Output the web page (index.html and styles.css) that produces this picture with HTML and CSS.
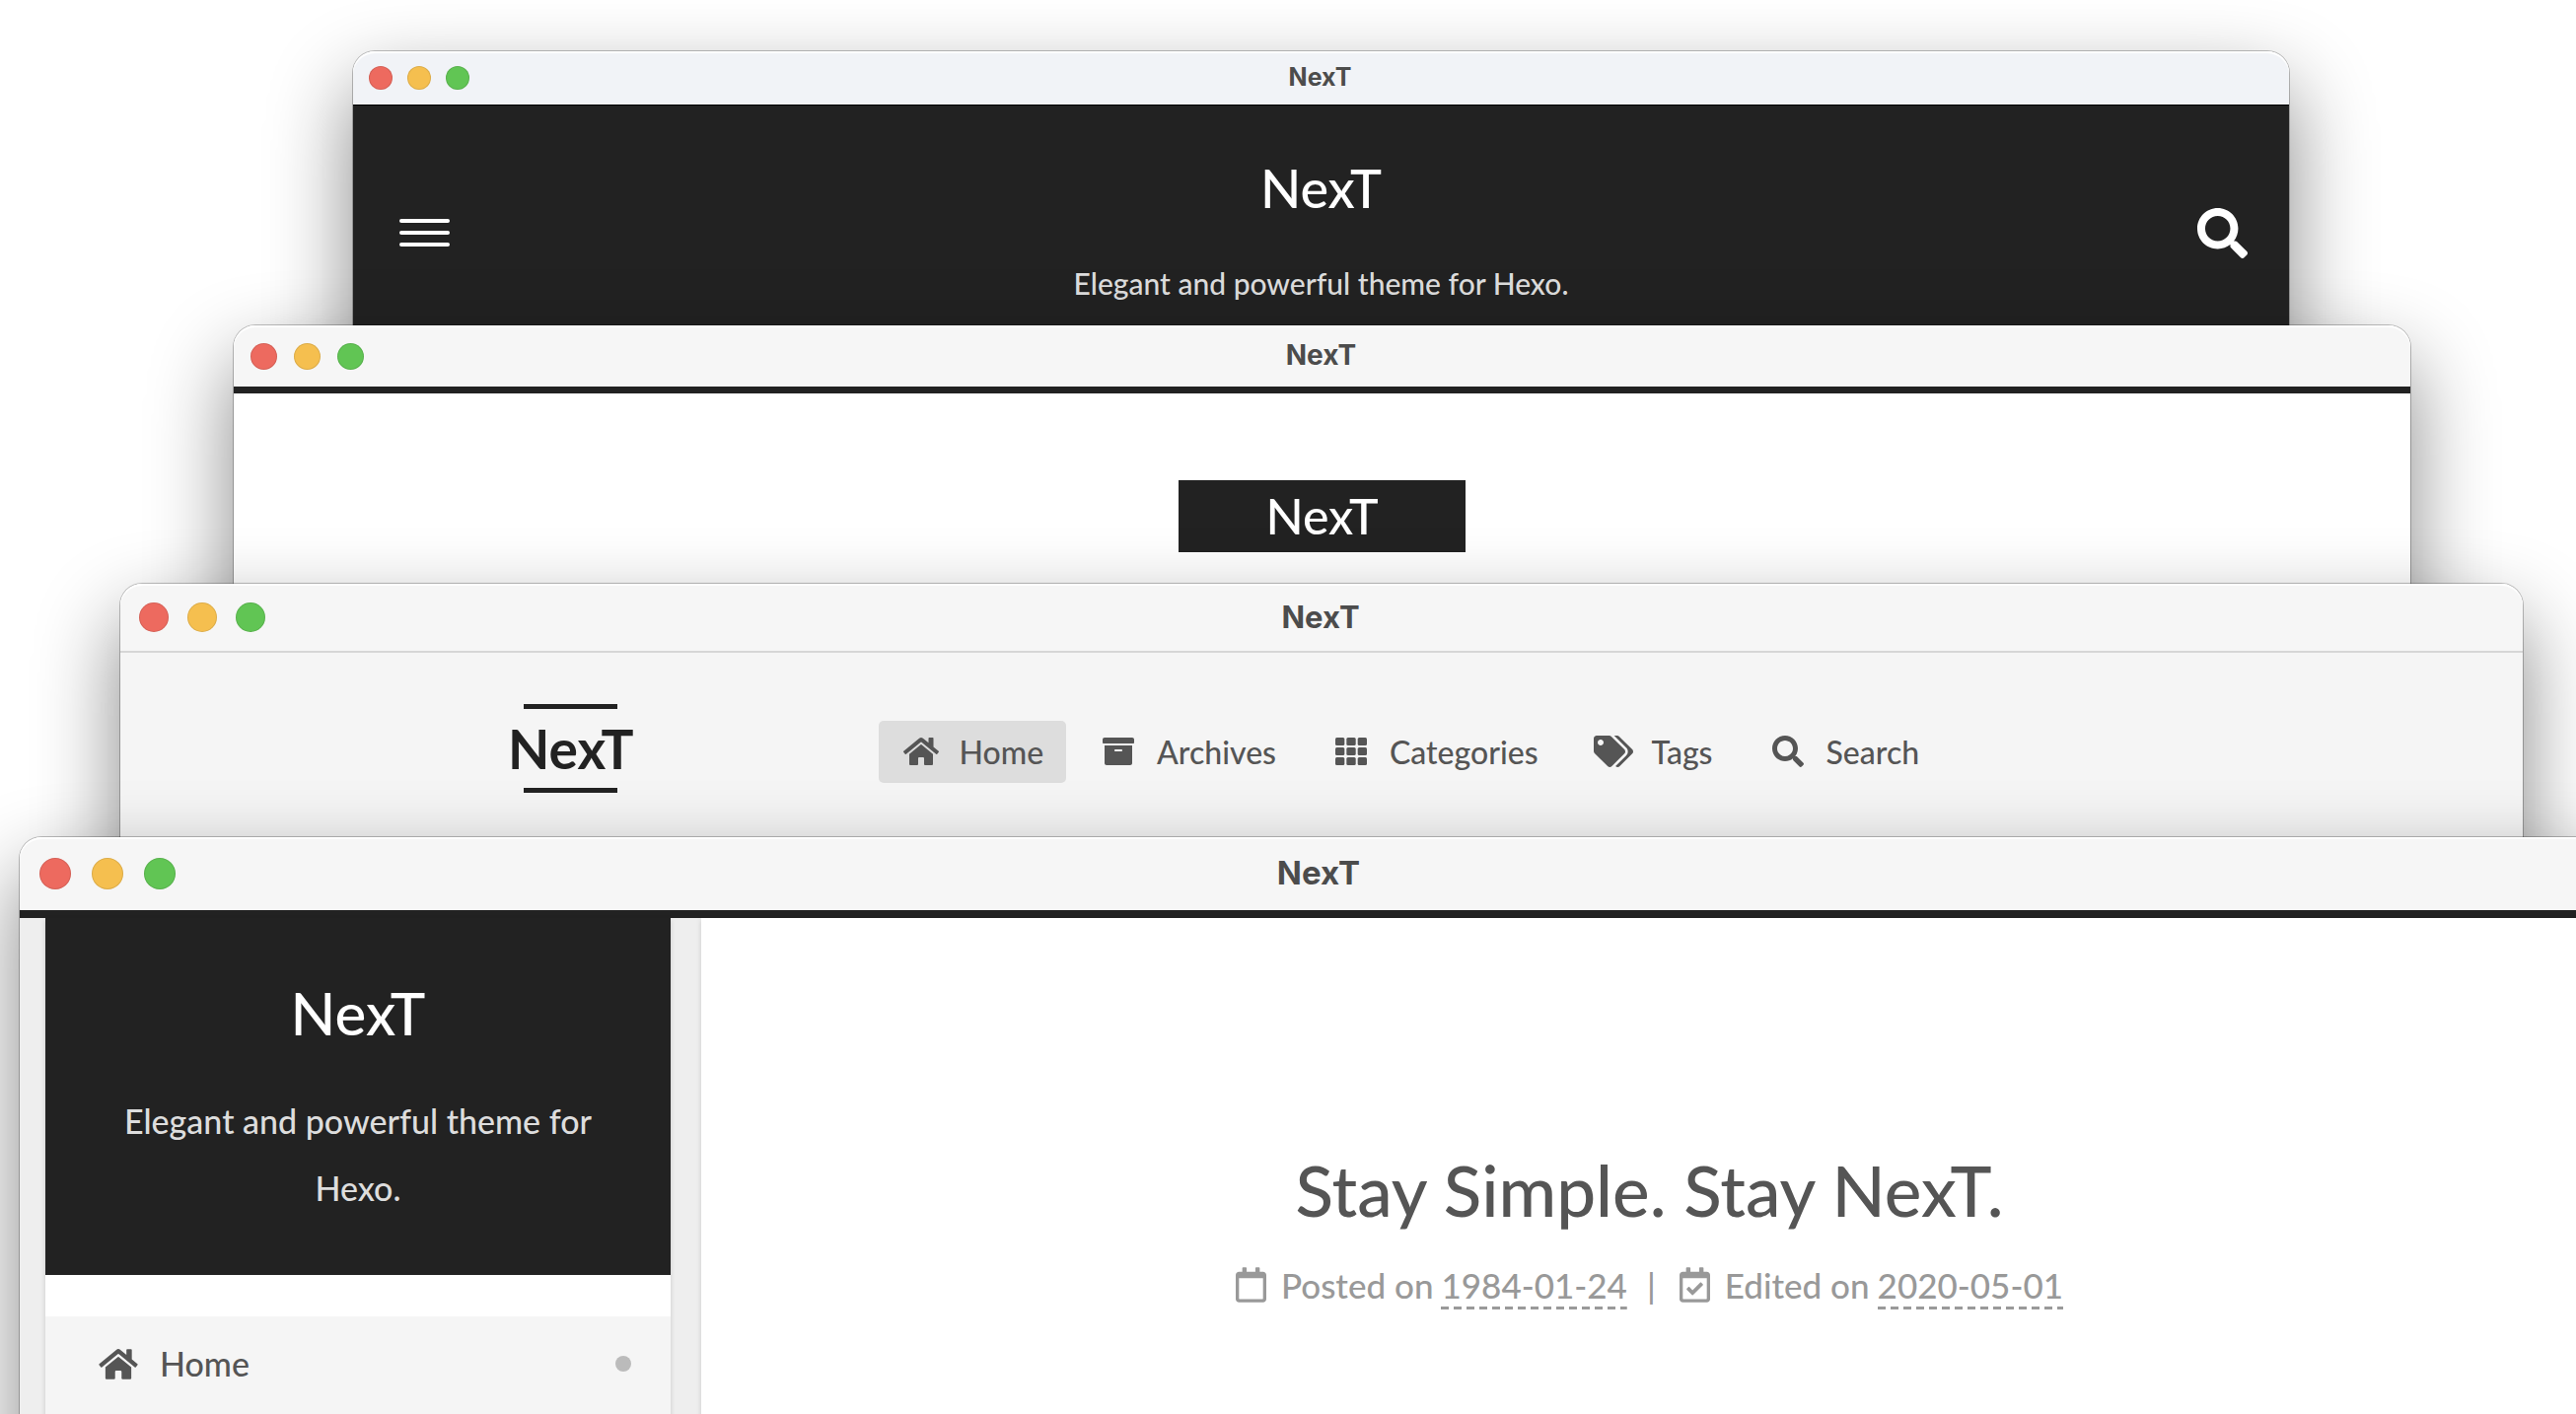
FILE: index.html
```html
<!DOCTYPE html>
<html lang="en">
<head>
<meta charset="utf-8">
<title>NexT</title>
<link rel="stylesheet" href="styles.css">
</head>
<body>
<svg class="sprite" aria-hidden="true">
  <symbol id="search" viewBox="0 0 512 512"><path d="M505 442.7L405.3 343c-4.5-4.5-10.6-7-17-7H372c27.6-35.3 44-79.7 44-128C416 93.1 322.9 0 208 0S0 93.1 0 208s93.1 208 208 208c48.3 0 92.7-16.4 128-44v16.3c0 6.4 2.5 12.5 7 17l99.7 99.7c9.4 9.4 24.6 9.4 33.9 0l28.3-28.3c9.4-9.4 9.4-24.6.1-34zM208 336c-70.7 0-128-57.2-128-128 0-70.7 57.2-128 128-128 70.7 0 128 57.2 128 128 0 70.7-57.2 128-128 128z"/></symbol>
  <symbol id="home" viewBox="0 0 576 512"><path d="M280.37 148.26L96 300.11V464a16 16 0 0 0 16 16l112.06-.29a16 16 0 0 0 15.92-16V368a16 16 0 0 1 16-16h64a16 16 0 0 1 16 16v95.64a16 16 0 0 0 16 16.05L464 480a16 16 0 0 0 16-16V300L295.67 148.26a12.19 12.19 0 0 0-15.3 0zM571.6 251.47L488 182.56V44.05a12 12 0 0 0-12-12h-56a12 12 0 0 0-12 12v72.61L318.47 43a48 48 0 0 0-61 0L4.34 251.47a12 12 0 0 0-1.6 16.9l25.5 31A12 12 0 0 0 45.15 301l235.22-193.74a12.19 12.19 0 0 1 15.3 0L530.9 301a12 12 0 0 0 16.9-1.6l25.5-31a12 12 0 0 0-1.7-16.93z"/></symbol>
  <symbol id="archive" viewBox="0 0 512 512"><path d="M32 448c0 17.7 14.3 32 32 32h384c17.7 0 32-14.3 32-32V160H32v288zm160-212c0-6.6 5.4-12 12-12h104c6.6 0 12 5.4 12 12v8c0 6.6-5.4 12-12 12H204c-6.6 0-12-5.4-12-12v-8zM480 32H32C14.3 32 0 46.3 0 64v48c0 8.8 7.2 16 16 16h480c8.8 0 16-7.2 16-16V64c0-17.7-14.3-32-32-32z"/></symbol>
  <symbol id="grid" viewBox="0 0 512 512">
    <rect x="0" y="32" width="149" height="128" rx="24"/><rect x="181" y="32" width="150" height="128" rx="24"/><rect x="363" y="32" width="149" height="128" rx="24"/>
    <rect x="0" y="192" width="149" height="128" rx="24"/><rect x="181" y="192" width="150" height="128" rx="24"/><rect x="363" y="192" width="149" height="128" rx="24"/>
    <rect x="0" y="352" width="149" height="128" rx="24"/><rect x="181" y="352" width="150" height="128" rx="24"/><rect x="363" y="352" width="149" height="128" rx="24"/>
  </symbol>
  <symbol id="tags" viewBox="0 0 640 512"><path d="M497.941 225.941L286.059 14.059A48 48 0 0 0 252.118 0H48C21.49 0 0 21.49 0 48v204.118a48 48 0 0 0 14.059 33.941l211.882 211.882c18.744 18.745 49.136 18.746 67.882 0l204.118-204.118c18.745-18.745 18.745-49.137 0-67.882zM112 160c-26.51 0-48-21.49-48-48s21.49-48 48-48 48 21.49 48 48-21.49 48-48 48zm513.941 133.823L421.823 497.941c-18.745 18.745-49.137 18.745-67.882 0l-.36-.36L527.64 323.522c16.999-16.999 26.36-39.6 26.36-63.64s-9.362-46.641-26.36-63.64L331.397 0h48.721a48 48 0 0 1 33.941 14.059l211.882 211.882c18.745 18.745 18.745 49.137 0 67.882z"/></symbol>
  <symbol id="calendar" viewBox="0 0 448 512"><path d="M400 64h-48V12c0-6.6-5.4-12-12-12h-40c-6.6 0-12 5.4-12 12v52H160V12c0-6.6-5.4-12-12-12h-40c-6.6 0-12 5.4-12 12v52H48C21.5 64 0 85.5 0 112v352c0 26.5 21.5 48 48 48h352c26.5 0 48-21.5 48-48V112c0-26.5-21.5-48-48-48zm-6 400H54c-3.3 0-6-2.7-6-6V160h352v298c0 3.3-2.7 6-6 6z"/></symbol>
  <symbol id="calendar-check" viewBox="0 0 448 512"><path d="M400 64h-48V12c0-6.6-5.4-12-12-12h-40c-6.6 0-12 5.4-12 12v52H160V12c0-6.6-5.4-12-12-12h-40c-6.6 0-12 5.4-12 12v52H48C21.5 64 0 85.5 0 112v352c0 26.5 21.5 48 48 48h352c26.5 0 48-21.5 48-48V112c0-26.5-21.5-48-48-48zm-6 400H54a6 6 0 0 1-6-6V160h352v298a6 6 0 0 1-6 6zm-52.849-200.65L198.842 404.519c-4.705 4.667-12.303 4.637-16.971-.068l-75.091-75.699c-4.667-4.705-4.637-12.303.068-16.971l22.719-22.536c4.705-4.667 12.303-4.637 16.97.069l44.104 44.461 111.072-110.181c4.705-4.667 12.303-4.637 16.971.068l22.536 22.718c4.667 4.705 4.636 12.303-.069 16.97z"/></symbol>
</svg>

<main class="desktop">
  <section class="window muse">
    <div class="titlebar">
      <div class="lights"><button class="light red" aria-label="Close"></button><button class="light amber" aria-label="Minimize"></button><button class="light green" aria-label="Zoom"></button></div>
      <span class="caption">NexT</span>
    </div>
    <header class="muse-header">
      <button class="menu-toggle" aria-label="Menu"><span></span><span></span><span></span></button>
      <div class="muse-brand">
        <h2 class="muse-name">NexT</h2>
        <p class="muse-tagline">Elegant and powerful theme for Hexo.</p>
      </div>
      <button class="search-toggle" aria-label="Search"><svg class="icon"><use href="#search"/></svg></button>
    </header>
  </section>

  <section class="window mist">
    <div class="titlebar">
      <div class="lights"><button class="light red" aria-label="Close"></button><button class="light amber" aria-label="Minimize"></button><button class="light green" aria-label="Zoom"></button></div>
      <span class="caption">NexT</span>
    </div>
    <header class="mist-header"><a class="mist-name" href="#">NexT</a></header>
  </section>

  <section class="window pisces">
    <div class="titlebar">
      <div class="lights"><button class="light red" aria-label="Close"></button><button class="light amber" aria-label="Minimize"></button><button class="light green" aria-label="Zoom"></button></div>
      <span class="caption">NexT</span>
    </div>
    <header class="pisces-header">
      <a class="pisces-name" href="#">NexT</a>
      <nav class="nav">
        <a class="nav-item active" href="#"><svg class="icon"><use href="#home"/></svg>Home</a>
        <a class="nav-item" href="#"><svg class="icon"><use href="#archive"/></svg>Archives</a>
        <a class="nav-item" href="#"><svg class="icon"><use href="#grid"/></svg>Categories</a>
        <a class="nav-item" href="#"><svg class="icon"><use href="#tags"/></svg>Tags</a>
        <a class="nav-item" href="#"><svg class="icon"><use href="#search"/></svg>Search</a>
      </nav>
    </header>
  </section>

  <section class="window gemini">
    <div class="titlebar">
      <div class="lights"><button class="light red" aria-label="Close"></button><button class="light amber" aria-label="Minimize"></button><button class="light green" aria-label="Zoom"></button></div>
      <span class="caption">NexT</span>
    </div>
    <div class="gemini-body">
      <aside class="sidebar">
        <header class="sidebar-header">
          <h2 class="sidebar-name">NexT</h2>
          <p class="sidebar-tagline">Elegant and powerful theme for Hexo.</p>
        </header>
        <nav class="side-menu">
          <a class="side-item" href="#"><svg class="icon"><use href="#home"/></svg>Home<span class="dot"></span></a>
        </nav>
      </aside>
      <article class="post">
        <h1 class="post-title">Stay Simple. Stay NexT.</h1>
        <div class="meta">
          <span class="meta-item"><svg class="icon"><use href="#calendar"/></svg>Posted on <time datetime="1984-01-24">1984-01-24</time></span>
          <span class="meta-separator">|</span>
          <span class="meta-item"><svg class="icon"><use href="#calendar-check"/></svg>Edited on <time datetime="2020-05-01">2020-05-01</time></span>
        </div>
      </article>
    </div>
  </section>
</main>
</body>
</html>
```
FILE: styles.css
```css
* { box-sizing: border-box; }

body {
  margin: 0;
  background: #fff;
  font-family: Lato, "Liberation Sans", sans-serif;
  font-weight: 500;
  color: #555;
  overflow: hidden;
}

h1, h2, p { margin: 0; font-weight: 500; }
a { color: inherit; text-decoration: none; }
button { padding: 0; border: 0; background: none; }

.sprite { position: absolute; width: 0; height: 0; }
.icon { display: block; fill: currentColor; flex: none; }

/* Stacked windows */
.desktop { position: relative; height: 100vh; overflow: hidden; }

.window {
  position: absolute;
  bottom: -160px;
  border-radius: 22px 22px 0 0;
  background: #fff;
  box-shadow: 0 0 0 1px rgba(0, 0, 0, .24), 0 36px 84px rgba(0, 0, 0, .48);
}

.muse { top: 52px; left: 358px; right: 291px; --light: 24px; --pitch: 15px; --inset: 16px; --bar: 54px; --caption: 25px; --tint: #f1f3f7; }
.mist { top: 330px; left: 237px; right: 168px; --light: 27px; --pitch: 17px; --inset: 17px; --bar: 62px; --caption: 28px; }
.pisces { top: 592px; left: 122px; right: 54px; --light: 30px; --pitch: 19px; --inset: 19px; --bar: 68px; --caption: 31px; }
.gemini { top: 849px; left: 20px; right: -44px; --light: 32px; --pitch: 21px; --inset: 20px; --bar: 74px; --caption: 33px; }

.titlebar {
  display: grid;
  grid-template-columns: 1fr auto 1fr;
  align-items: center;
  height: var(--bar);
  padding: 0 var(--inset);
  border-radius: 22px 22px 0 0;
  background: var(--tint, #f6f6f6);
  box-shadow: inset 0 2px 1px #fff;
}

.lights { display: flex; gap: var(--pitch); }
.light { width: var(--light); height: var(--light); border-radius: 50%; box-shadow: inset 0 0 0 1px rgba(0, 0, 0, .1); }
.red { background: #ed6a5f; }
.amber { background: #f5bf4f; }
.green { background: #61c554; }

.caption {
  padding: 0 2px 2px 0;
  font-family: Inter, "Liberation Sans", sans-serif;
  font-weight: 700;
  font-size: var(--caption);
  line-height: 1;
  color: #4c4c4c;
}

/* Dark header */
.muse-header {
  display: grid;
  grid-template-columns: auto 1fr auto;
  align-items: center;
  height: 100%;
  align-content: start;
  padding: 44px 42px 0 47px;
  border-top: 1px solid #000;
  background: #222;
}
.menu-toggle { display: grid; gap: 8px; width: 51px; }
.menu-toggle span { height: 4px; border-radius: 2px; background: #fff; }
.muse-brand { padding: 0 5px 14px 0; text-align: center; }
.muse-name { font-size: 54px; line-height: 80px; color: #fff; }
.muse-tagline { margin-top: 36px; font-size: 30px; line-height: 40px; color: #ddd; }
.search-toggle { color: #fff; }
.search-toggle .icon { width: 51px; height: 51px; }

/* Boxed site name */
.mist-header { display: flex; justify-content: center; padding-top: 88px; border-top: 7px solid #222; }
.mist-name { padding: 0 88px; background: #222; color: #fff; font-size: 50px; line-height: 73px; }

/* Horizontal navigation */
.pisces { background: #f5f5f5; }
.pisces-header { display: flex; align-items: center; padding: 52px 0 0 393px; border-top: 2px solid #d6d6d6; }
.pisces-name {
  display: grid;
  justify-items: center;
  margin-right: 248px;
  color: #222;
  font-size: 55px;
  font-weight: 700;
  line-height: 80px;
}
.pisces-name::before, .pisces-name::after { content: ""; width: 95px; height: 5px; background: #222; }
.nav { display: flex; gap: 10px; padding-top: 6px; font-size: 32px; line-height: 63px; }
.nav-item { display: flex; align-items: center; gap: 19px; padding: 0 23px; border-radius: 5px; }
.nav-item.active { background: #ddd; }
.nav-item .icon { width: 40px; height: 32px; }

/* Sidebar and post */
.gemini { background: #eee; }
.gemini-body { display: flex; align-items: stretch; gap: 31px; height: 100%; padding: 0 22px 0 26px; border-top: 8px solid #222; }
.sidebar { flex: none; width: 634px; background: #fff; box-shadow: 0 2px 5px rgba(0, 0, 0, .16); }
.sidebar-header { padding: 51px 60px 54px; background: #222; text-align: center; }
.sidebar-name { font-size: 60px; line-height: 90px; color: #fff; }
.sidebar-tagline { margin-top: 31px; font-size: 34px; line-height: 68px; color: #ddd; }
.side-menu { padding-top: 42px; }
.side-item { display: flex; align-items: center; gap: 20px; padding: 0 40px 8px 52px; background: #f5f5f5; font-size: 34px; line-height: 96px; }
.side-item .icon { width: 44px; height: 35px; }
.dot { width: 16px; height: 16px; margin-left: auto; border-radius: 50%; background: #bbb; }

.post { flex: 1; padding-top: 232px; background: #fff; box-shadow: 0 2px 5px rgba(0, 0, 0, .16); text-align: center; }
.post-title { font-size: 71px; line-height: 88px; }
.meta { display: flex; justify-content: center; gap: 20px; margin-top: 28px; color: #999; font-size: 35px; line-height: 48px; }
.meta-separator { margin-right: 4px; }
.meta-item { display: flex; gap: 8px; }
.meta-item .icon { width: 31px; height: 36px; margin: 6px 7px 0 0; }
.meta-item time {
  padding-bottom: 1px;
  background: repeating-linear-gradient(90deg, #999 0 8px, transparent 8px 13px) bottom / 100% 3px no-repeat;
}
```
